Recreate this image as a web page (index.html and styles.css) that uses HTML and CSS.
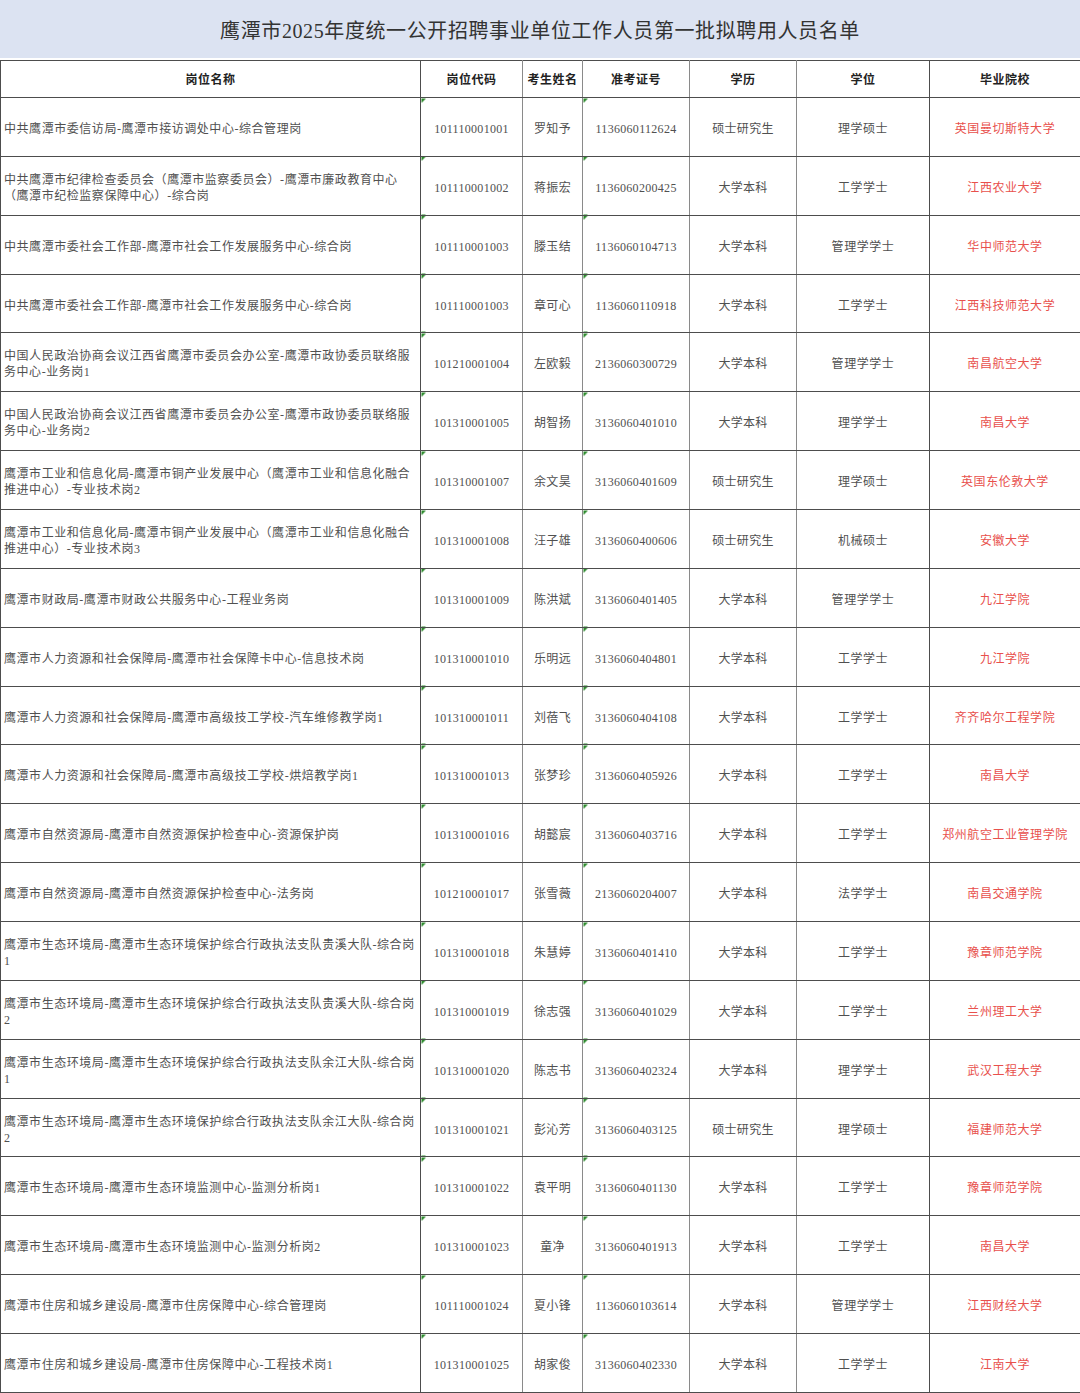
FILE: index.html
```html
<!DOCTYPE html>
<html lang="zh-CN">
<head>
<meta charset="utf-8">
<title>鹰潭市2025年度统一公开招聘事业单位工作人员第一批拟聘用人员名单</title>
<link rel="stylesheet" href="styles.css">
</head>
<body>
<div class="page">
  <div class="title">鹰潭市2025年度统一公开招聘事业单位工作人员第一批拟聘用人员名单</div>
  <table class="list">
    <colgroup>
      <col class="c1"><col class="c2"><col class="c3"><col class="c4"><col class="c5"><col class="c6"><col class="c7">
    </colgroup>
    <thead>
      <tr><th>岗位名称</th><th>岗位代码</th><th>考生姓名</th><th>准考证号</th><th>学历</th><th>学位</th><th>毕业院校</th></tr>
    </thead>
    <tbody>
      <tr><td class="pos">中共鹰潭市委信访局-鹰潭市接访调处中心-综合管理岗</td><td class="code">101110001001</td><td>罗知予</td><td class="code">1136060112624</td><td>硕士研究生</td><td>理学硕士</td><td class="school">英国曼切斯特大学</td></tr>
      <tr><td class="pos">中共鹰潭市纪律检查委员会（鹰潭市监察委员会）-鹰潭市廉政教育中心<br>（鹰潭市纪检监察保障中心）-综合岗</td><td class="code">101110001002</td><td>蒋振宏</td><td class="code">1136060200425</td><td>大学本科</td><td>工学学士</td><td class="school">江西农业大学</td></tr>
      <tr><td class="pos">中共鹰潭市委社会工作部-鹰潭市社会工作发展服务中心-综合岗</td><td class="code">101110001003</td><td>滕玉结</td><td class="code">1136060104713</td><td>大学本科</td><td>管理学学士</td><td class="school">华中师范大学</td></tr>
      <tr><td class="pos">中共鹰潭市委社会工作部-鹰潭市社会工作发展服务中心-综合岗</td><td class="code">101110001003</td><td>章可心</td><td class="code">1136060110918</td><td>大学本科</td><td>工学学士</td><td class="school">江西科技师范大学</td></tr>
      <tr><td class="pos">中国人民政治协商会议江西省鹰潭市委员会办公室-鹰潭市政协委员联络服<br>务中心-业务岗1</td><td class="code">101210001004</td><td>左欧毅</td><td class="code">2136060300729</td><td>大学本科</td><td>管理学学士</td><td class="school">南昌航空大学</td></tr>
      <tr><td class="pos">中国人民政治协商会议江西省鹰潭市委员会办公室-鹰潭市政协委员联络服<br>务中心-业务岗2</td><td class="code">101310001005</td><td>胡智扬</td><td class="code">3136060401010</td><td>大学本科</td><td>理学学士</td><td class="school">南昌大学</td></tr>
      <tr><td class="pos">鹰潭市工业和信息化局-鹰潭市铜产业发展中心（鹰潭市工业和信息化融合<br>推进中心）-专业技术岗2</td><td class="code">101310001007</td><td>余文昊</td><td class="code">3136060401609</td><td>硕士研究生</td><td>理学硕士</td><td class="school">英国东伦敦大学</td></tr>
      <tr><td class="pos">鹰潭市工业和信息化局-鹰潭市铜产业发展中心（鹰潭市工业和信息化融合<br>推进中心）-专业技术岗3</td><td class="code">101310001008</td><td>汪子雄</td><td class="code">3136060400606</td><td>硕士研究生</td><td>机械硕士</td><td class="school">安徽大学</td></tr>
      <tr><td class="pos">鹰潭市财政局-鹰潭市财政公共服务中心-工程业务岗</td><td class="code">101310001009</td><td>陈洪斌</td><td class="code">3136060401405</td><td>大学本科</td><td>管理学学士</td><td class="school">九江学院</td></tr>
      <tr><td class="pos">鹰潭市人力资源和社会保障局-鹰潭市社会保障卡中心-信息技术岗</td><td class="code">101310001010</td><td>乐明远</td><td class="code">3136060404801</td><td>大学本科</td><td>工学学士</td><td class="school">九江学院</td></tr>
      <tr><td class="pos">鹰潭市人力资源和社会保障局-鹰潭市高级技工学校-汽车维修教学岗1</td><td class="code">101310001011</td><td>刘蓓飞</td><td class="code">3136060404108</td><td>大学本科</td><td>工学学士</td><td class="school">齐齐哈尔工程学院</td></tr>
      <tr><td class="pos">鹰潭市人力资源和社会保障局-鹰潭市高级技工学校-烘焙教学岗1</td><td class="code">101310001013</td><td>张梦珍</td><td class="code">3136060405926</td><td>大学本科</td><td>工学学士</td><td class="school">南昌大学</td></tr>
      <tr><td class="pos">鹰潭市自然资源局-鹰潭市自然资源保护检查中心-资源保护岗</td><td class="code">101310001016</td><td>胡懿宸</td><td class="code">3136060403716</td><td>大学本科</td><td>工学学士</td><td class="school">郑州航空工业管理学院</td></tr>
      <tr><td class="pos">鹰潭市自然资源局-鹰潭市自然资源保护检查中心-法务岗</td><td class="code">101210001017</td><td>张雪薇</td><td class="code">2136060204007</td><td>大学本科</td><td>法学学士</td><td class="school">南昌交通学院</td></tr>
      <tr><td class="pos">鹰潭市生态环境局-鹰潭市生态环境保护综合行政执法支队贵溪大队-综合岗<br>1</td><td class="code">101310001018</td><td>朱慧婷</td><td class="code">3136060401410</td><td>大学本科</td><td>工学学士</td><td class="school">豫章师范学院</td></tr>
      <tr><td class="pos">鹰潭市生态环境局-鹰潭市生态环境保护综合行政执法支队贵溪大队-综合岗<br>2</td><td class="code">101310001019</td><td>徐志强</td><td class="code">3136060401029</td><td>大学本科</td><td>工学学士</td><td class="school">兰州理工大学</td></tr>
      <tr><td class="pos">鹰潭市生态环境局-鹰潭市生态环境保护综合行政执法支队余江大队-综合岗<br>1</td><td class="code">101310001020</td><td>陈志书</td><td class="code">3136060402324</td><td>大学本科</td><td>理学学士</td><td class="school">武汉工程大学</td></tr>
      <tr><td class="pos">鹰潭市生态环境局-鹰潭市生态环境保护综合行政执法支队余江大队-综合岗<br>2</td><td class="code">101310001021</td><td>彭沁芳</td><td class="code">3136060403125</td><td>硕士研究生</td><td>理学硕士</td><td class="school">福建师范大学</td></tr>
      <tr><td class="pos">鹰潭市生态环境局-鹰潭市生态环境监测中心-监测分析岗1</td><td class="code">101310001022</td><td>袁平明</td><td class="code">3136060401130</td><td>大学本科</td><td>工学学士</td><td class="school">豫章师范学院</td></tr>
      <tr><td class="pos">鹰潭市生态环境局-鹰潭市生态环境监测中心-监测分析岗2</td><td class="code">101310001023</td><td>童净</td><td class="code">3136060401913</td><td>大学本科</td><td>工学学士</td><td class="school">南昌大学</td></tr>
      <tr><td class="pos">鹰潭市住房和城乡建设局-鹰潭市住房保障中心-综合管理岗</td><td class="code">101110001024</td><td>夏小锋</td><td class="code">1136060103614</td><td>大学本科</td><td>管理学学士</td><td class="school">江西财经大学</td></tr>
      <tr><td class="pos">鹰潭市住房和城乡建设局-鹰潭市住房保障中心-工程技术岗1</td><td class="code">101310001025</td><td>胡家俊</td><td class="code">3136060402330</td><td>大学本科</td><td>工学学士</td><td class="school">江南大学</td></tr>
    </tbody>
  </table>
</div>
</body>
</html>
```
FILE: styles.css
```css
html, body {
  margin: 0;
  padding: 0;
  background: #ffffff;
}
body {
  font-family: "Liberation Serif", "Noto Sans CJK SC", serif;
  color: #505050;
}
.page {
  width: 1080px;
}
.title {
  height: 58px;
  background: #dce3f2;
  color: #333333;
  font-size: 20px;
  letter-spacing: 0.6px;
  line-height: 62px;
  text-align: center;
  margin-bottom: 2px;
}
.list {
  width: 1080px;
  border-collapse: collapse;
  table-layout: fixed;
  font-size: 12px;
  letter-spacing: 0.55px;
}
.c1 { width: 420px; }
.c2 { width: 102px; }
.c3 { width: 60px; }
.c4 { width: 107px; }
.c5 { width: 107px; }
.c6 { width: 133px; }
.c7 { width: 151px; }
.list th,
.list td {
  border: 1px solid #4d4d4d;
  text-align: center;
  vertical-align: middle;
  padding: 0;
  line-height: 16px;
}
.list th {
  height: 35px;
  padding-top: 1px;
  font-weight: bold;
  color: #222222;
}
.list td {
  height: 53.86px;
  padding-top: 4px;
}
.list td.code,
.list td:nth-child(3),
.list td:nth-child(4),
.list td:nth-child(5) {
  letter-spacing: 0.3px;
}
.list td:nth-child(2),
.list td:nth-child(3),
.list th:nth-child(2),
.list th:nth-child(3),
.list th:nth-child(4),
.list td:nth-child(4),
.list td:nth-child(5),
.list th:nth-child(5) {
  border-right-color: #8a8a8a;
}
.list td.pos {
  text-align: left;
  padding-left: 3px;
  white-space: nowrap;
}
.list td.code {
  background: linear-gradient(135deg, #2e8b2e 0, #2e8b2e 3px, transparent 3px);
}
.list td.school {
  color: #e8504c;
}
```
